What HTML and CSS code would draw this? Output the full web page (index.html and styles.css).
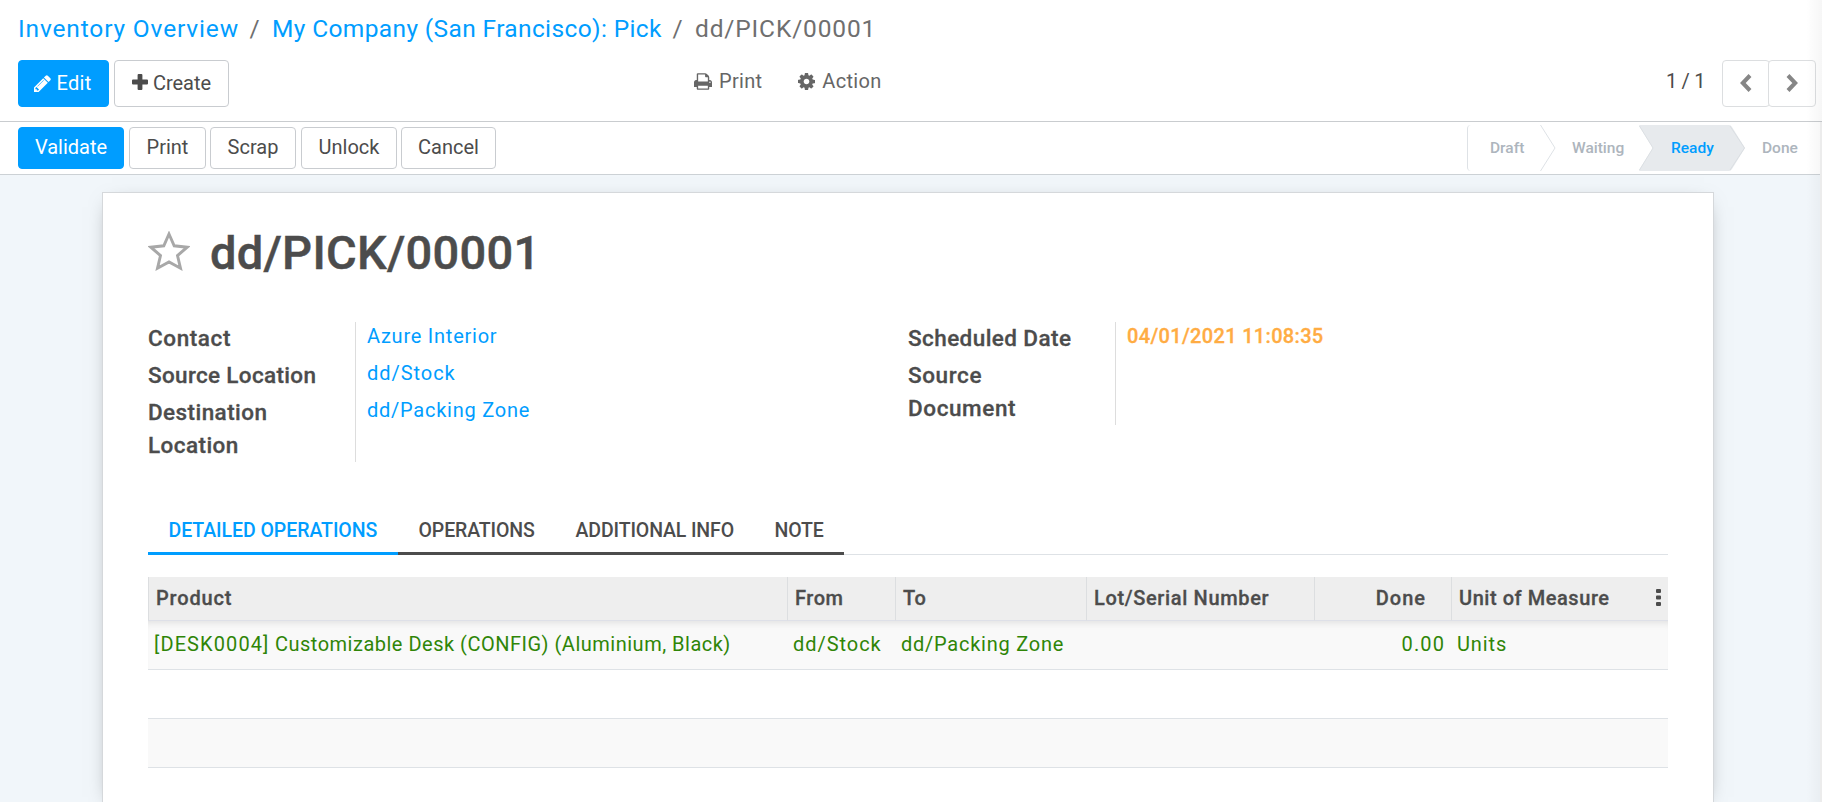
FILE: index.html
```html
<!DOCTYPE html>
<html lang="en">
<head>
<meta charset="utf-8">
<title>dd/PICK/00001 - Inventory</title>
<link rel="stylesheet" href="styles.css">
</head>
<body>
<header class="control-panel">
  <nav class="breadcrumb">
    <a class="bc-root">Inventory Overview</a><i>/</i><a class="bc-parent">My Company (San Francisco): Pick</a><i>/</i><span class="bc-current">dd/PICK/00001</span>
  </nav>
  <div class="cp-row">
    <div class="cp-buttons">
      <button class="btn primary edit"><svg class="ic-pencil" viewBox="0 0 1536 1536"><path fill="currentColor" d="M363 1408l91-91-235-235-91 91v107h128v128zM886 480q0-22-22-22-10 0-17 7l-542 542q-7 7-7 17 0 22 22 22 10 0 17-7l542-542q7-7 7-17zM832 288l416 416-832 832H0v-416zM1515 384q0 53-37 90l-166 166-416-416 166-165q36-38 90-38 53 0 91 38l235 234q37 39 37 91z"/></svg><span>Edit</span></button>
      <button class="btn create"><svg class="ic-plus" viewBox="0 0 16 16"><path fill="currentColor" d="M6.6 0h2.8q1 0 1 1v4.6H15q1 0 1 1v2.8q0 1-1 1h-4.6V15q0 1-1 1H6.6q-1 0-1-1v-4.6H1q-1 0-1-1V6.600q0-1 1-1h4.600V1q0-1 1-1z"/></svg><span>Create</span></button>
    </div>
    <div class="cp-actions">
      <span class="menu"><svg class="ic-print" viewBox="0 0 1664 1536"><path fill="currentColor" fill-rule="evenodd" d="M384 1408h896v-256H384zM384 768h896V384h-160q-40 0-68-28t-28-68V128H384zM1536 832q0-26-19-45t-45-19-45 19-19 45 19 45 45 19 45-19 19-45zM1664 832v416q0 13-9.500 22.500T1632 1280h-224v160q0 40-28 68t-68 28H352q-40 0-68-28t-28-68v-160H32q-13 0-22.500-9.500T0 1248V832q0-79 56.500-135.500T192 640h64V96q0-40 28-68t68-28h672q40 0 88 20t76 48l152 152q28 28 48 76t20 88v256h64q79 0 135.500 56.500T1664 832z"/></svg><span class="m-print">Print</span></span>
      <span class="menu"><svg class="ic-cog" viewBox="0 0 1536 1536"><path fill="currentColor" fill-rule="evenodd" d="M1024 768q0-106-75-181t-181-75-181 75-75 181 75 181 181 75 181-75 75-181zM1536 659v222q0 12-8 23t-20 13l-185 28q-19 54-39 91 35 50 107 138 10 12 10 25t-9 23q-27 37-99 108t-94 71q-12 0-26-9l-138-108q-44 23-91 38-16 136-29 186-7 28-36 28H657q-14 0-24.500-8.500T621 1506l-28-184q-49-16-90-37l-141 107q-10 9-25 9-14 0-25-11-126-114-165-168-7-10-7-23 0-12 8-23 15-21 51-66.500t54-70.500q-27-50-41-99L29 913q-13-2-21-12.500T0 877V655q0-12 8-23t19-13l186-28q14-46 39-92-40-57-107-138-10-12-10-24 0-10 9-23 26-36 98.500-107.500T337 135q13 0 26 10l138 107q44-23 91-38 16-136 29-186 7-28 36-28h222q14 0 24.500 8.500T915 30l28 184q49 16 90 37l142-107q9-9 24-9 13 0 25 10 129 119 165 170 7 8 7 22 0 12-8 23-15 21-51 66.500t-54 70.500q26 50 41 98l183 28q13 2 21 12.500t8 23.500z"/></svg><span class="m-action">Action</span></span>
    </div>
    <div class="pager">
      <span class="count">1 / 1</span>
      <div class="pager-buttons">
        <button class="nav"><svg viewBox="0 0 12 18"><path d="M10 1.500L2.800 9L10 16.500"/></svg></button>
        <button class="nav"><svg viewBox="0 0 12 18"><path d="M2 1.500L9.200 9L2 16.500"/></svg></button>
      </div>
    </div>
  </div>
</header>
<main class="content">
  <div class="statusbar">
    <div class="status-buttons">
      <button class="btn sb primary validate"><span>Validate</span></button>
      <button class="btn sb print"><span>Print</span></button>
      <button class="btn sb scrap"><span>Scrap</span></button>
      <button class="btn sb unlock"><span>Unlock</span></button>
      <button class="btn sb cancel"><span>Cancel</span></button>
    </div>
    <div class="stages">
      <span class="stage draft">Draft</span>
      <svg class="sep" viewBox="0 0 16 46"><path d="M.5 0L15 23L.5 46" fill="none" stroke="#dee2e6"/></svg>
      <span class="stage waiting">Waiting</span>
      <span class="stage ready"><svg class="arrow" viewBox="0 0 107 46"><path d="M0 1Q0 0 1 0H90Q92 0 93 2L106 23L93 44Q92 46 90 46H1Q0 46 0 45L14 23Z" fill="#e7eaed"/><path d="M91 1L105.500 23L91 45M.5 1L14 23L.5 45" fill="none" stroke="#dbdfe3"/></svg><b>Ready</b></span>
      <span class="stage done">Done</span>
    </div>
  </div>
  <section class="sheet">
    <div class="title">
      <svg class="star" viewBox="0 0 42 40"><path d="M21 3L26.200 14.800L39.200 16.200L29.500 24.600L32.500 37.200L21 31L9.500 37.200L12.500 24.600L2.800 16.200L15.800 14.800Z" fill="none" stroke="#a8a8a8" stroke-width="2.900"/></svg>
      <h1>dd/PICK/00001</h1>
    </div>
    <div class="groups">
      <dl class="group">
        <dt class="l-contact">Contact</dt><dd><a class="v-azure">Azure Interior</a></dd>
        <dt class="l-source">Source Location</dt><dd><a class="v-stock">dd/Stock</a></dd>
        <dt class="l-dest">Destination Location</dt><dd><a class="v-pack">dd/Packing Zone</a></dd>
      </dl>
      <dl class="group">
        <dt class="l-sched">Scheduled Date</dt><dd><b class="v-date">04/01/2021 11:08:35</b></dd>
        <dt class="l-doc">Source Document</dt><dd></dd>
      </dl>
    </div>
    <nav class="tabs">
      <a class="tab active t-detail">Detailed Operations</a>
      <a class="tab t-ops">Operations</a>
      <a class="tab t-info">Additional Info</a>
      <a class="tab t-note">Note</a>
    </nav>
    <table class="list">
      <colgroup><col class="c1"><col class="c2"><col class="c3"><col class="c4"><col class="c5"><col class="c6"></colgroup>
      <thead><tr>
        <th class="h-product">Product</th><th class="h-from">From</th><th>To</th><th class="h-lot">Lot/Serial Number</th><th class="num h-done">Done</th>
        <th><div class="last-head"><span class="h-uom">Unit of Measure</span><svg class="dots" viewBox="0 0 5 17"><path fill="currentColor" d="M1 0h3q1 0 1 1v2q0 1-1 1H1q-1 0-1-1V1q0-1 1-1zM1 6.500h3q1 0 1 1v2q0 1-1 1H1q-1 0-1-1v-2q0-1 1-1zM1 13h3q1 0 1 1v2q0 1-1 1H1q-1 0-1-1v-2q0-1 1-1z"/></svg></div></th>
      </tr></thead>
      <tbody>
        <tr class="data"><td class="d-product"><span class="sku">[DESK0004]</span> Customizable Desk (CONFIG) (Aluminium, Black)</td><td class="v-stock">dd/Stock</td><td class="v-pack">dd/Packing Zone</td><td></td><td class="num d-qty">0.00</td><td class="d-units">Units</td></tr>
        <tr><td colspan="6"></td></tr>
        <tr><td colspan="6"></td></tr>
      </tbody>
    </table>
  </section>
</main>
<div class="edge"></div>
</body>
</html>
```
FILE: styles.css
```css
* { box-sizing: border-box; }
html, body { margin: 0; height: 100%; overflow: hidden; }
body {
  font-family: Roboto, "Liberation Sans", sans-serif;
  font-size: 20px;
  color: #4c4c4c;
  background: #fff;
  display: flex;
  flex-direction: column;
  white-space: nowrap;
}
a { color: #009dff; }
button { font: inherit; color: inherit; padding: 0; }
svg { display: block; flex: none; }

/* Control panel */
.control-panel { height: 122px; flex: none; padding: 14px 6px 0 18px; border-bottom: 1px solid #c9cccf; }
.breadcrumb { height: 46px; line-height: 30px; font-size: 24.500px; color: #6f6f6f; display: flex; }
.breadcrumb i { font-style: normal; width: 35px; text-align: center; }
.bc-root { width: 219px; letter-spacing: .85px; }
.bc-parent { width: 388px; letter-spacing: .37px; }
.bc-current { letter-spacing: .85px; }
.cp-row { display: grid; grid-template-columns: 676px 1fr auto; }
.cp-buttons { display: flex; gap: 5px; }
.btn {
  display: flex; align-items: center; justify-content: center;
  height: 47px; border: 1px solid #c9ccd0; border-radius: 4px; background: #fff;
}
.btn span { padding-bottom: 1px; }
.primary { background: #009dff; border-color: #009dff; color: #fff; }
.edit { width: 91px; gap: 5px; letter-spacing: .3px; padding-right: 1px; }
.create { width: 115px; gap: 5px; }
.ic-pencil { width: 17px; height: 17px; }
.ic-plus { width: 16px; height: 16px; margin-top: -3px; }
.cp-actions { display: flex; gap: 36px; padding-top: 8px; height: 34px; color: #666; }
.menu { display: flex; align-items: center; gap: 7px; line-height: 24px; letter-spacing: .3px; }
.ic-print { width: 18px; height: 17px; }
.ic-cog { width: 17px; height: 17px; }
.pager { display: flex; }
.count { width: 56px; line-height: 24px; padding-top: 9px; letter-spacing: -.3px; }
.pager-buttons { display: flex; }
.nav {
  width: 48px; height: 47px; background: #fff; border: 1px solid #dcdee0; border-radius: 4px;
  display: flex; align-items: center; justify-content: center;
}
.nav + .nav { width: 48px; margin-left: -2px; }
.nav svg { width: 12px; height: 18px; margin-top: -2px; fill: none; stroke: #868686; stroke-width: 4; }

/* Status bar */
.content { flex: 1; min-height: 0; background: #f1f6fa; display: flex; flex-direction: column; }
.statusbar {
  height: 53px; flex: none; background: #fff; border-bottom: 1px solid #ccd1d5;
  padding-left: 18px; display: flex; justify-content: space-between;
}
.status-buttons { display: flex; gap: 4px; padding-top: 5px; }
.sb { height: 42px; }
.sb span { padding-bottom: 2px; }
.validate { width: 106px; margin-right: 1px; }
.print { width: 77px; }
.scrap { width: 86px; margin-right: 1px; }
.unlock { width: 96px; }
.cancel { width: 95px; }
.stages { display: flex; padding-top: 3px; width: 355px; font-size: 15.500px; font-weight: 500; color: #adb5bd; line-height: 46px; }
.stage { height: 46px; }
.draft { width: 73px; padding-left: 22px; border-left: 1px solid #dee2e6; border-radius: 4px 0 0 4px; }
.sep { width: 16px; height: 46px; }
.waiting { width: 83px; padding-left: 16px; }
.ready { width: 107px; padding-left: 32px; position: relative; color: #009dff; }
.ready b { position: relative; font-weight: 500; }
.arrow { position: absolute; left: 0; top: 0; width: 107px; height: 46px; }
.done { padding-left: 16px; }

/* Form sheet */
.sheet {
  flex: 1; min-height: 0; margin: 17px 108px 0 102px; padding: 30px 45px 0;
  background: #fff; border: 1px solid #d5d8db; border-bottom: 0;
  box-shadow: 0 5px 20px -10px rgba(0, 0, 0, .5);
}
.title { display: flex; height: 99px; }
.star { width: 42px; height: 40px; margin: 8px 20px 0 0; }
h1 { margin: 0; font-size: 47px; line-height: 60px; font-weight: 500; letter-spacing: .27px; -webkit-text-stroke: .5px; }
.groups { display: flex; }
.group { margin: 0; width: 760px; display: grid; grid-template-columns: 207px 1fr; align-self: flex-start; }
dt { width: 175px; margin-bottom: 4px; font-size: 22.500px; font-weight: 500; line-height: 33px; white-space: normal; -webkit-text-stroke: .3px; }
dt:last-of-type { margin-bottom: 0; }
dd { margin: 0; padding-left: 11px; border-left: 1px solid #ddd; line-height: 28px; }
.l-contact, .l-doc { letter-spacing: .6px; }
.l-source { letter-spacing: .33px; }
.l-dest, .l-sched { letter-spacing: .42px; }
.v-azure, .v-pack { letter-spacing: .76px; }
.v-stock { letter-spacing: .95px; }
.v-date { font-weight: 500; color: #ffac43; letter-spacing: .33px; -webkit-text-stroke: .3px; }

.tabs { display: flex; margin-top: 45px; height: 48px; border-bottom: 1px solid #dee2e6; }
.tab {
  height: 48px; border-bottom: 3px solid #4c4c4c; color: #4c4c4c; padding-left: 20.500px;
  line-height: 47px; font-weight: 500; text-transform: uppercase; font-size: 19.500px; letter-spacing: -.12px;
}
.tab.active { color: #009dff; border-color: #009dff; letter-spacing: -.06px; }
.t-detail { width: 250px; }
.t-ops { width: 157px; }
.t-info { width: 199px; }
.t-note { width: 90px; }

.list { margin-top: 22px; width: 1520px; table-layout: fixed; border-collapse: separate; border-spacing: 0; }
.c1 { width: 639px; } .c2 { width: 108px; } .c3 { width: 191px; }
.c4 { width: 228px; } .c5 { width: 137px; } .c6 { width: 217px; }
th {
  height: 44px; padding: 0 7px 2px; text-align: left; background: #eee; font-weight: 500; line-height: 24px;
  border-left: 1px solid #dcdee0; border-bottom: 1px solid #dee0e8; letter-spacing: .55px; -webkit-text-stroke: .3px;
}
.h-product { letter-spacing: .85px; }
.h-lot { letter-spacing: .65px; }
.h-done { padding-right: 25px; letter-spacing: 1px; }
.num { text-align: right; }
.last-head { display: flex; justify-content: space-between; align-items: center; }
.dots { width: 5px; height: 17px; }
td { height: 49px; padding: 0 6px 2px; border-bottom: 1px solid #dee2e6; line-height: 24px; }
.d-product { letter-spacing: .5px; }
.sku { letter-spacing: 1.100px; }
.d-qty { letter-spacing: 1.100px; }
.d-units { letter-spacing: .9px; }
tbody tr:nth-child(odd) { background: #f9f9f9; }
.data { color: #2f8507; box-shadow: inset 0 8px 8px -7px rgba(0, 0, 0, .12); }

/* Soft shade along the window's right edge */
.edge {
  position: absolute; right: 0; top: 0; bottom: 0; width: 16px; pointer-events: none;
  background: linear-gradient(to right, rgba(0, 0, 0, 0), rgba(0, 0, 0, .035));
}
.edge::after {
  content: ""; position: absolute; right: 0; top: 122px; bottom: 0; width: 2px; background: #ececec;
}
```
